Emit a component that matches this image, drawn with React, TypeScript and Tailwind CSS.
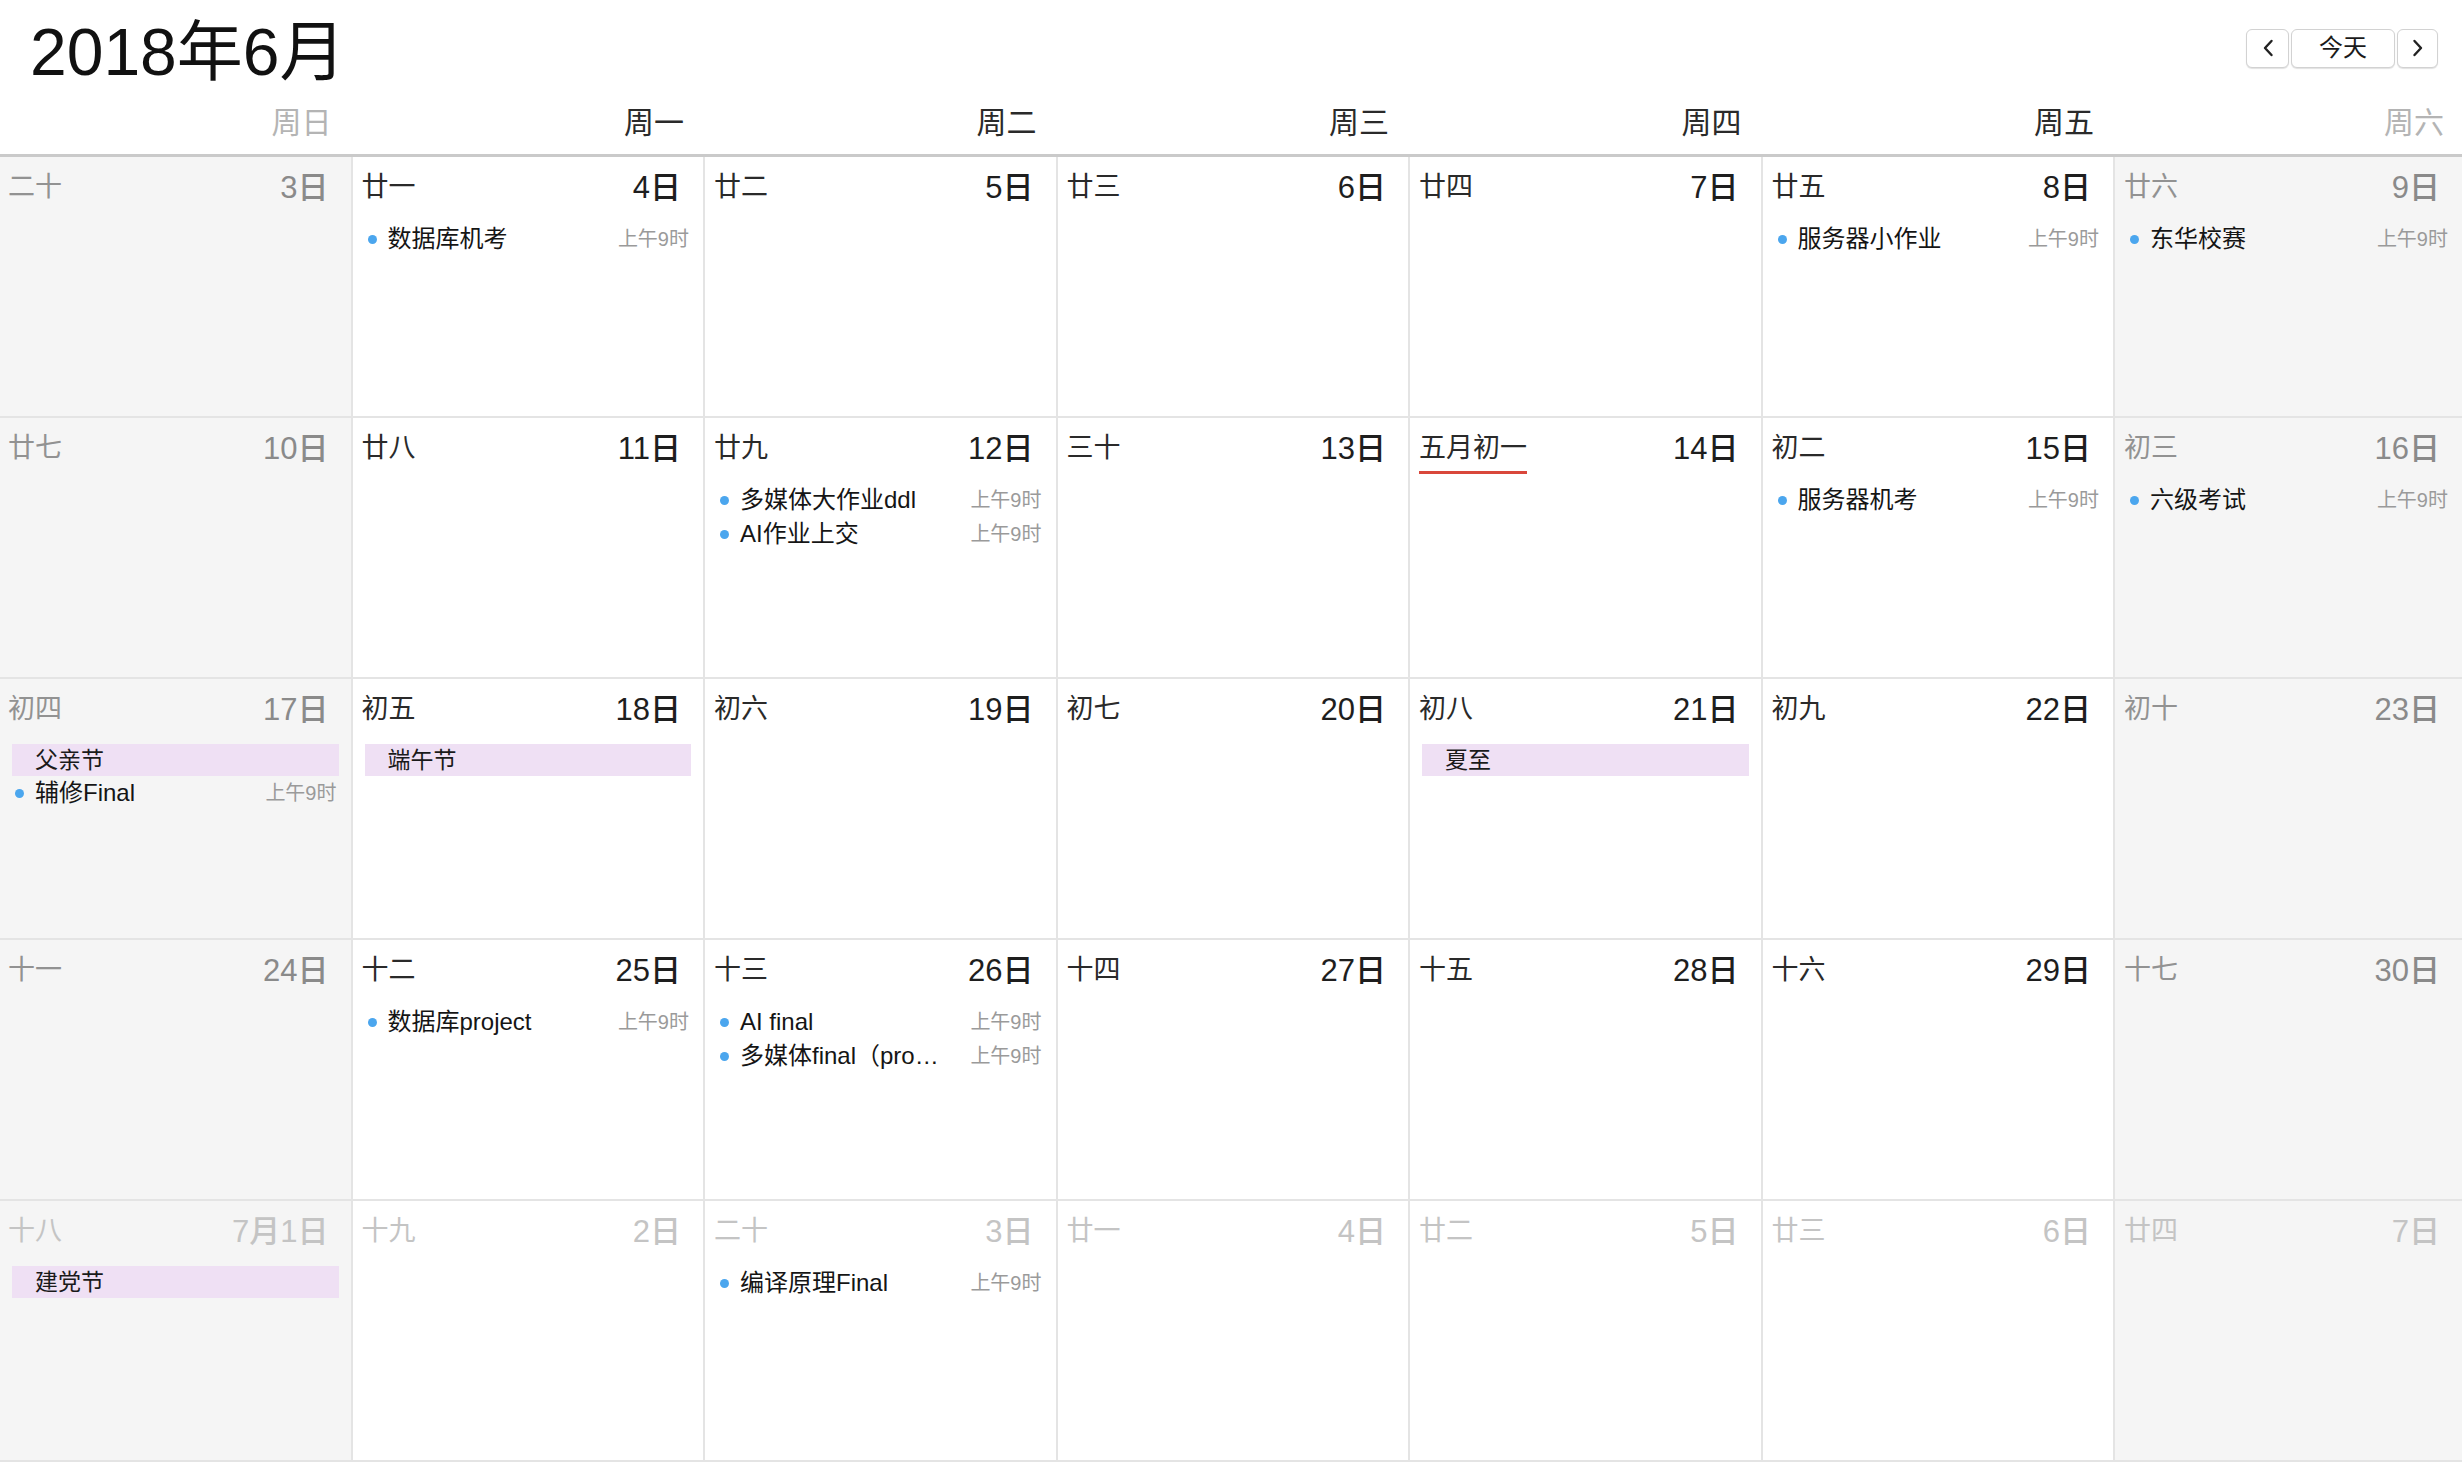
import React from 'react';

type Item = { kind: 'event' | 'holiday'; title: string; time?: string };

interface Day {
  lunar: string;
  date: string;
  items?: Item[];
  mark?: boolean;
}

const ev = (title: string): Item => ({ kind: 'event', title, time: '上午9时' });
const hol = (title: string): Item => ({ kind: 'holiday', title });

const weekdays = ['周日', '周一', '周二', '周三', '周四', '周五', '周六'];

const weeks: Day[][] = [
  [
    { lunar: '二十', date: '3日' },
    { lunar: '廿一', date: '4日', items: [ev('数据库机考')] },
    { lunar: '廿二', date: '5日' },
    { lunar: '廿三', date: '6日' },
    { lunar: '廿四', date: '7日' },
    { lunar: '廿五', date: '8日', items: [ev('服务器小作业')] },
    { lunar: '廿六', date: '9日', items: [ev('东华校赛')] },
  ],
  [
    { lunar: '廿七', date: '10日' },
    { lunar: '廿八', date: '11日' },
    { lunar: '廿九', date: '12日', items: [ev('多媒体大作业ddl'), ev('AI作业上交')] },
    { lunar: '三十', date: '13日' },
    { lunar: '五月初一', date: '14日', mark: true },
    { lunar: '初二', date: '15日', items: [ev('服务器机考')] },
    { lunar: '初三', date: '16日', items: [ev('六级考试')] },
  ],
  [
    { lunar: '初四', date: '17日', items: [hol('父亲节'), ev('辅修Final')] },
    { lunar: '初五', date: '18日', items: [hol('端午节')] },
    { lunar: '初六', date: '19日' },
    { lunar: '初七', date: '20日' },
    { lunar: '初八', date: '21日', items: [hol('夏至')] },
    { lunar: '初九', date: '22日' },
    { lunar: '初十', date: '23日' },
  ],
  [
    { lunar: '十一', date: '24日' },
    { lunar: '十二', date: '25日', items: [ev('数据库project')] },
    { lunar: '十三', date: '26日', items: [ev('AI final'), ev('多媒体final（pro…')] },
    { lunar: '十四', date: '27日' },
    { lunar: '十五', date: '28日' },
    { lunar: '十六', date: '29日' },
    { lunar: '十七', date: '30日' },
  ],
  [
    { lunar: '十八', date: '7月1日', items: [hol('建党节')] },
    { lunar: '十九', date: '2日' },
    { lunar: '二十', date: '3日', items: [ev('编译原理Final')] },
    { lunar: '廿一', date: '4日' },
    { lunar: '廿二', date: '5日' },
    { lunar: '廿三', date: '6日' },
    { lunar: '廿四', date: '7日' },
  ],
];

const Cell: React.FC<{ day: Day; col: number; dim: boolean }> = ({ day, col, dim }) => {
  const weekend = col === 0 || col === 6;
  const lunarColor = dim ? 'text-[#c4c4c4]' : weekend ? 'text-[#929292]' : 'text-[#2a2a2a]';
  const dateColor = dim ? 'text-[#c4c4c4]' : weekend ? 'text-[#8a8a8a]' : 'text-[#1e1e1e]';
  return (
    <div
      className={`flex flex-col border-b-2 border-[#e4e4e4] ${col < 6 ? 'border-r-2' : ''} ${
        weekend ? 'bg-[#f5f5f5]' : 'bg-white'
      }`}
    >
      <div className={`mt-[13px] flex h-[34px] items-center justify-between pr-[22px] ${col === 0 ? 'pl-[8px]' : 'pl-[9px]'}`}>
        <span className={`relative text-[27px] leading-none ${lunarColor}`}>
          {day.lunar}
          {day.mark && <span className="absolute left-0 right-0 -bottom-[12px] h-[3px] bg-[#d9473b]" />}
        </span>
        <span className={`text-[31px] leading-none font-medium ${dateColor}`}>{day.date}</span>
      </div>
      <div className="mt-[18px] flex flex-col">
        {day.items?.map((item, i) =>
          item.kind === 'holiday' ? (
            <div key={i} className="mx-[12px] flex h-[32px] items-center bg-[#efe0f4] pl-[23px] text-[23px] text-[#1a1a1a]">
              {item.title}
            </div>
          ) : (
            <div key={i} className="flex h-[34px] items-center pl-[15px] pr-[14px]">
              <span className="h-[9px] w-[9px] shrink-0 rounded-full bg-[#4ba6ee]" />
              <span className="ml-[11px] flex-1 whitespace-nowrap text-[24px] text-[#151515]">{item.title}</span>
              <span className="text-[20px] text-[#9a9a9a]">{item.time}</span>
            </div>
          )
        )}
      </div>
    </div>
  );
};

const App: React.FC = () => {
  return (
    <div className="flex h-[1462px] w-[2462px] flex-col overflow-hidden bg-white font-['Liberation_Sans','Noto_Sans_CJK_SC',sans-serif]">
      {/* Title bar */}
      <div className="flex h-[96px] shrink-0 items-center justify-between pl-[30px] pr-[24px]">
        <h1 className="mt-[8px] text-[66px] leading-none font-normal text-[#111]">2018年6月</h1>
        <div className="flex gap-[2px]">
          <button className="flex h-[39px] w-[43px] items-center justify-center rounded-[6px] border border-[#d2d2d2] bg-white shadow-[0_1px_1px_rgba(0,0,0,0.12)]">
            <svg width="12" height="18" viewBox="0 0 12 18" fill="none">
              <path d="M9.5 2 L3 9 L9.5 16" stroke="#222" strokeWidth="2.4" strokeLinecap="round" strokeLinejoin="round" />
            </svg>
          </button>
          <button className="flex h-[39px] w-[104px] items-center justify-center rounded-[6px] border border-[#d2d2d2] bg-white text-[24px] text-[#1a1a1a] shadow-[0_1px_1px_rgba(0,0,0,0.12)]">
            今天
          </button>
          <button className="flex h-[39px] w-[41px] items-center justify-center rounded-[6px] border border-[#d2d2d2] bg-white shadow-[0_1px_1px_rgba(0,0,0,0.12)]">
            <svg width="12" height="18" viewBox="0 0 12 18" fill="none">
              <path d="M2.5 2 L9 9 L2.5 16" stroke="#222" strokeWidth="2.4" strokeLinecap="round" strokeLinejoin="round" />
            </svg>
          </button>
        </div>
      </div>

      {/* Weekday header */}
      <div className="grid h-[61px] shrink-0 grid-cols-[repeat(6,352.5px)_1fr] border-b-[3px] border-[#cacaca]">
        {weekdays.map((w, i) => (
          <div
            key={w}
            className={`flex items-center justify-end pb-[4px] text-[30px] leading-none ${
              i === 0 || i === 6 ? 'text-[#b4b4b4]' : 'text-[#2a2a2a]'
            } ${i === 6 ? 'pr-[18px]' : 'pr-[21px]'}`}
          >
            {w}
          </div>
        ))}
      </div>

      {/* Month grid */}
      <div className="grid flex-1 grid-cols-[repeat(6,352.5px)_1fr] grid-rows-5">
        {weeks.map((week, r) =>
          week.map((day, c) => <Cell key={`${r}-${c}`} day={day} col={c} dim={r === 4} />)
        )}
      </div>
    </div>
  );
};

export default App;
